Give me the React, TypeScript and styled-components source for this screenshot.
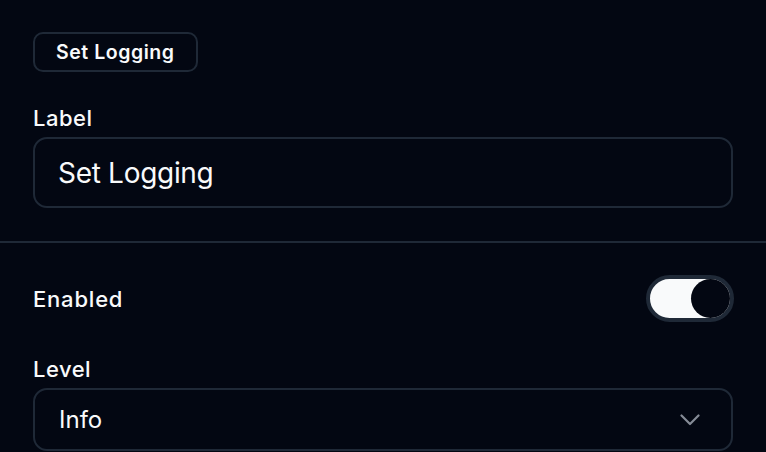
import React, { useState } from "react";
import styled, { createGlobalStyle } from "styled-components";

const GlobalStyle = createGlobalStyle`
  html, body {
    margin: 0;
    padding: 0;
    background: #030712;
  }
  body {
    font-family: Inter, "Noto Sans", "Liberation Sans", sans-serif;
    color: #f9fafb;
    -webkit-font-smoothing: antialiased;
  }
`;

const Panel = styled.div`
  width: 100%;
  min-height: 452px;
  background: #030712;
`;

const Section = styled.section<{ $bottom?: number }>`
  display: flex;
  flex-direction: column;
  padding: 32px 33px ${(p) => p.$bottom ?? 33}px;
`;

const Divider = styled.hr`
  margin: 0;
  border: none;
  height: 2px;
  background: #1f2937;
`;

const Badge = styled.div`
  align-self: flex-start;
  box-sizing: border-box;
  height: 40px;
  display: flex;
  align-items: center;
  padding: 0 21px;
  border: 2px solid #1f2937;
  border-radius: 10px;
  font-size: 19.5px;
  font-weight: 600;
  letter-spacing: 0.55px;
`;

const FieldLabel = styled.label<{ $top?: number }>`
  margin-top: ${(p) => p.$top ?? 0}px;
  margin-bottom: 5px;
  font-size: 22px;
  line-height: 28px;
  font-weight: 500;
  letter-spacing: 0.5px;
`;

const TextInput = styled.input`
  box-sizing: border-box;
  width: 100%;
  height: 71px;
  padding: 0 23px;
  border: 2px solid #1f2937;
  border-radius: 14px;
  background: transparent;
  color: #f9fafb;
  font-family: inherit;
  font-size: 28px;
  letter-spacing: -0.3px;
  outline: none;
`;

const ToggleRow = styled.div`
  display: flex;
  align-items: center;
  justify-content: space-between;
  margin-bottom: 33px;
`;

const RowLabel = styled.span`
  font-size: 22px;
  line-height: 28px;
  font-weight: 500;
  letter-spacing: 0.8px;
`;

const Toggle = styled.button<{ $on: boolean }>`
  box-sizing: border-box;
  width: 88px;
  height: 47px;
  padding: 0;
  margin-right: -1px;
  display: flex;
  align-items: center;
  justify-content: ${(p) => (p.$on ? "flex-end" : "flex-start")};
  border: 4px solid #1f2937;
  border-radius: 999px;
  background: ${(p) => (p.$on ? "#f9fafb" : "#1f2937")};
  cursor: pointer;
`;

const Knob = styled.span`
  width: 39px;
  height: 39px;
  border-radius: 50%;
  background: #030712;
`;

const SelectBox = styled.div`
  box-sizing: border-box;
  width: 100%;
  height: 63px;
  display: flex;
  align-items: center;
  justify-content: space-between;
  padding: 0 31px 0 24px;
  border: 2px solid #1f2937;
  border-radius: 14px;
  font-size: 24px;
`;

const Chevron = () => (
  <svg width="20" height="12" viewBox="0 0 20 12" fill="none">
    <path
      d="M1.5 1.5 L10 10 L18.5 1.5"
      stroke="#858b96"
      strokeWidth="2.2"
      strokeLinecap="round"
      strokeLinejoin="round"
    />
  </svg>
);

export default function App() {
  const [label, setLabel] = useState("Set Logging");
  const [enabled, setEnabled] = useState(true);

  return (
    <>
      <GlobalStyle />
      <Panel>
        <Section>
          <Badge>Set Logging</Badge>
          <FieldLabel $top={32}>Label</FieldLabel>
          <TextInput value={label} onChange={(e) => setLabel(e.target.value)} />
        </Section>
        <Divider />
        <Section $bottom={0}>
          <ToggleRow>
            <RowLabel>Enabled</RowLabel>
            <Toggle
              role="switch"
              aria-checked={enabled}
              $on={enabled}
              onClick={() => setEnabled((prev) => !prev)}
            >
              <Knob />
            </Toggle>
          </ToggleRow>
          <FieldLabel>Level</FieldLabel>
          <SelectBox>
            <span>Info</span>
            <Chevron />
          </SelectBox>
        </Section>
      </Panel>
    </>
  );
}
